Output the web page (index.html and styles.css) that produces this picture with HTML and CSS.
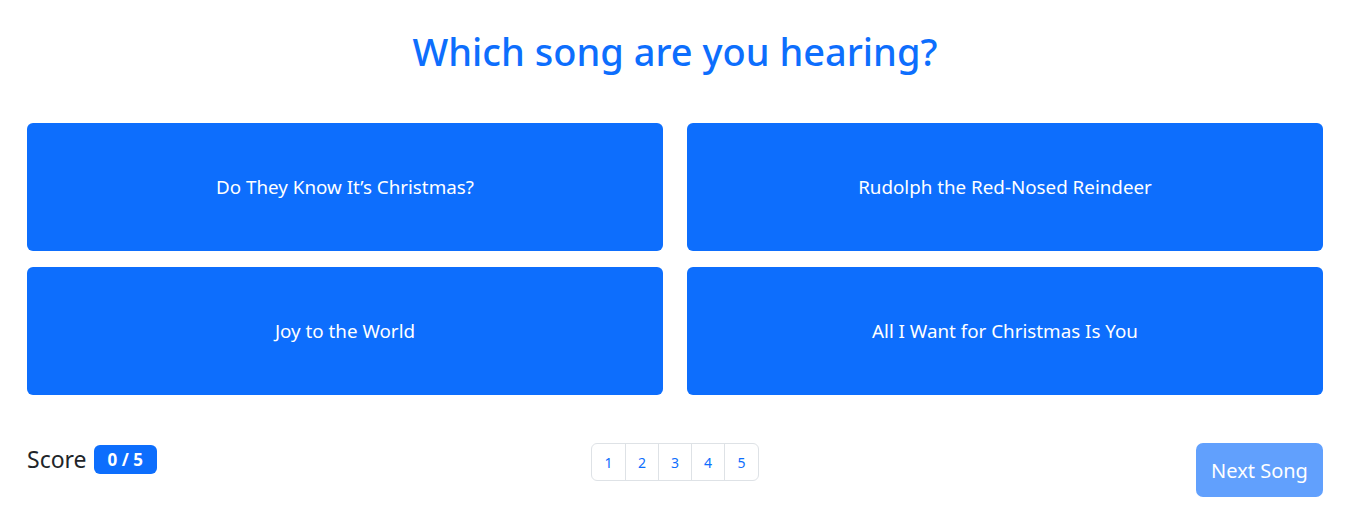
FILE: index.html
```html
<!DOCTYPE html>
<html lang="en">
<head>
<meta charset="utf-8">
<title>Song Quiz</title>
<link rel="stylesheet" href="styles.css">
</head>
<body>
<main class="container">
  <h1 class="title">Which song are you hearing?</h1>
  <div class="options">
    <button class="option">Do They Know It’s Christmas?</button>
    <button class="option">Rudolph the Red-Nosed Reindeer</button>
    <button class="option">Joy to the World</button>
    <button class="option">All I Want for Christmas Is You</button>
  </div>
  <div class="footer">
    <div class="score">Score <span class="badge">0 / 5</span></div>
    <ul class="pagination">
      <li class="page">1</li>
      <li class="page">2</li>
      <li class="page">3</li>
      <li class="page">4</li>
      <li class="page">5</li>
    </ul>
    <div class="actions">
      <button class="next" disabled>Next Song</button>
    </div>
  </div>
</main>
</body>
</html>
```

FILE: styles.css
```css
* { box-sizing: border-box; }
html, body { margin: 0; padding: 0; background: #fff; }
body {
  font-family: "Noto Sans", "Open Sans", sans-serif;
  color: #212529;
}
.container {
  width: 1296px;
  margin: 0 0 0 27px;
  padding-top: 28px;
}
.title {
  margin: 0 0 49px;
  text-align: center;
  font-size: 38px;
  font-weight: 500;
  line-height: 46px;
  color: #0d6efd;
}
.options {
  display: grid;
  grid-template-columns: 1fr 1fr;
  column-gap: 24px;
  row-gap: 16px;
}
.option {
  height: 128px;
  border: 0;
  border-radius: 6px;
  background: #0d6efd;
  color: #fff;
  font-family: inherit;
  font-size: 18.8px;
  line-height: 1.5;
  padding: 0 16px;
}
.footer {
  display: grid;
  grid-template-columns: 1fr auto 1fr;
  align-items: start;
  margin-top: 48px;
}
.score {
  font-size: 23px;
  line-height: 1.2;
  display: flex;
  align-items: center;
  gap: 7px;
  padding-top: 2px;
}
.badge {
  display: inline-block;
  background: #0d6efd;
  color: #fff;
  font-weight: 700;
  font-size: 17px;
  padding: 4px 14px;
  border-radius: 6px;
  line-height: 21px;
}
.pagination {
  display: flex;
  list-style: none;
  margin: 0;
  padding: 0;
}
.page {
  width: 34px;
  height: 38px;
  display: flex;
  align-items: center;
  justify-content: center;
  border: 1px solid #dee2e6;
  margin-left: -1px;
  font-size: 14px;
  color: #0d6efd;
}
.page:first-child { border-radius: 6px 0 0 6px; margin-left: 0; width: 35px; }
.page:last-child { border-radius: 0 6px 6px 0; width: 35px; }
.actions {
  display: flex;
  justify-content: flex-end;
}
.next {
  width: 127px;
  height: 54px;
  border: 0;
  border-radius: 7px;
  background: #0d6efd;
  opacity: 0.65;
  color: #fff;
  font-family: inherit;
  font-size: 20px;
  padding: 0;
}
```
